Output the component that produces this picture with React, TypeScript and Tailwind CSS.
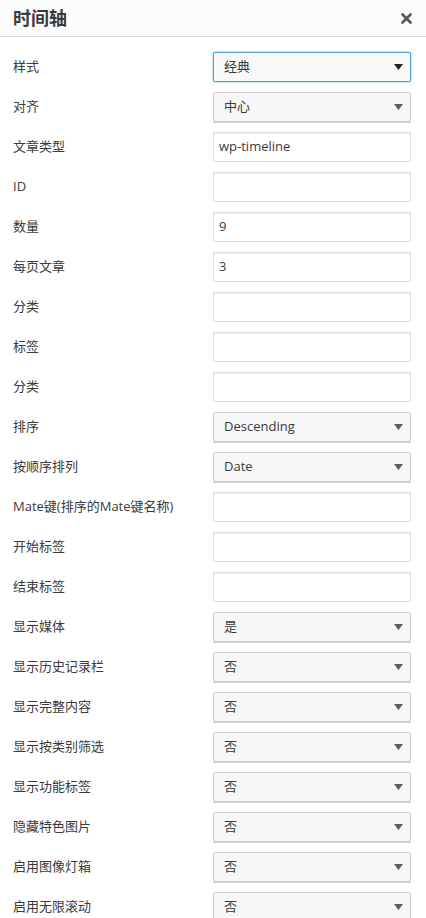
const font = { fontFamily: '"Open Sans", "Noto Sans CJK SC", sans-serif' };

type Field =
  | { label: string; kind: "select"; value: string; focus?: boolean }
  | { label: string; kind: "input"; value?: string };

const fields: Field[] = [
  { label: "样式", kind: "select", value: "经典", focus: true },
  { label: "对齐", kind: "select", value: "中心" },
  { label: "文章类型", kind: "input", value: "wp-timeline" },
  { label: "ID", kind: "input" },
  { label: "数量", kind: "input", value: "9" },
  { label: "每页文章", kind: "input", value: "3" },
  { label: "分类", kind: "input" },
  { label: "标签", kind: "input" },
  { label: "分类", kind: "input" },
  { label: "排序", kind: "select", value: "Descending" },
  { label: "按顺序排列", kind: "select", value: "Date" },
  { label: "Mate键(排序的Mate键名称)", kind: "input" },
  { label: "开始标签", kind: "input" },
  { label: "结束标签", kind: "input" },
  { label: "显示媒体", kind: "select", value: "是" },
  { label: "显示历史记录栏", kind: "select", value: "否" },
  { label: "显示完整内容", kind: "select", value: "否" },
  { label: "显示按类别筛选", kind: "select", value: "否" },
  { label: "显示功能标签", kind: "select", value: "否" },
  { label: "隐藏特色图片", kind: "select", value: "否" },
  { label: "启用图像灯箱", kind: "select", value: "否" },
  { label: "启用无限滚动", kind: "select", value: "否" },
];

const Caret = ({ dark }: { dark?: boolean }) => (
  <svg width="9" height="6" viewBox="0 0 9 6" className="mr-[1px]">
    <path d="M0 0 H9 L4.5 6 Z" fill={dark ? "#222" : "#555d66"} />
  </svg>
);

const Control = ({ field }: { field: Field }) => {
  if (field.kind === "input") {
    return (
      <div className="w-[198px] h-[30px] border border-[#dddddd] bg-white shadow-[inset_0_1px_2px_rgba(0,0,0,0.07)] flex items-center px-[5px] text-[13px] text-[#3a3a3a]">
        {field.value}
      </div>
    );
  }
  return (
    <div
      className={
        field.focus
          ? "w-[198px] h-[30px] rounded-[2px] border border-[#5b9dd9] bg-[#f9f9f9] shadow-[0_0_2px_rgba(30,140,190,0.8)] flex items-center justify-between pl-[10px] pr-[6px] text-[13px] text-[#3a3a3a]"
          : "w-[198px] h-[30px] rounded-[2px] border border-[#cccccc] bg-[#f7f7f7] shadow-[0_1px_0_#cccccc] flex items-center justify-between pl-[10px] pr-[6px] text-[13px] text-[#3a3a3a]"
      }
    >
      <span>{field.value}</span>
      <Caret dark={field.focus} />
    </div>
  );
};

export default function App() {
  return (
    <div className="w-[426px] min-h-[918px] bg-white overflow-hidden" style={font}>
      <div className="h-[37px] bg-[#fcfcfc] border-b border-[#dddddd] flex items-center justify-between pl-[13px] pr-[14px]">
        <h1 className="text-[18px] font-bold text-[#3a3a3a]">时间轴</h1>
        <svg width="11" height="11" viewBox="0 0 11 11">
          <path d="M1.5 1.5 L9.5 9.5 M9.5 1.5 L1.5 9.5" stroke="#50575e" strokeWidth="2.6" strokeLinecap="round" />
        </svg>
      </div>
      <div className="flex flex-col gap-[10px] pt-[15px] pl-[13px]">
        {fields.map((f, i) => (
          <div key={i} className="flex items-center h-[30px]">
            <div className="w-[200px] text-[13px] text-[#3a3a3a]">{f.label}</div>
            <Control field={f} />
          </div>
        ))}
      </div>
    </div>
  );
}
